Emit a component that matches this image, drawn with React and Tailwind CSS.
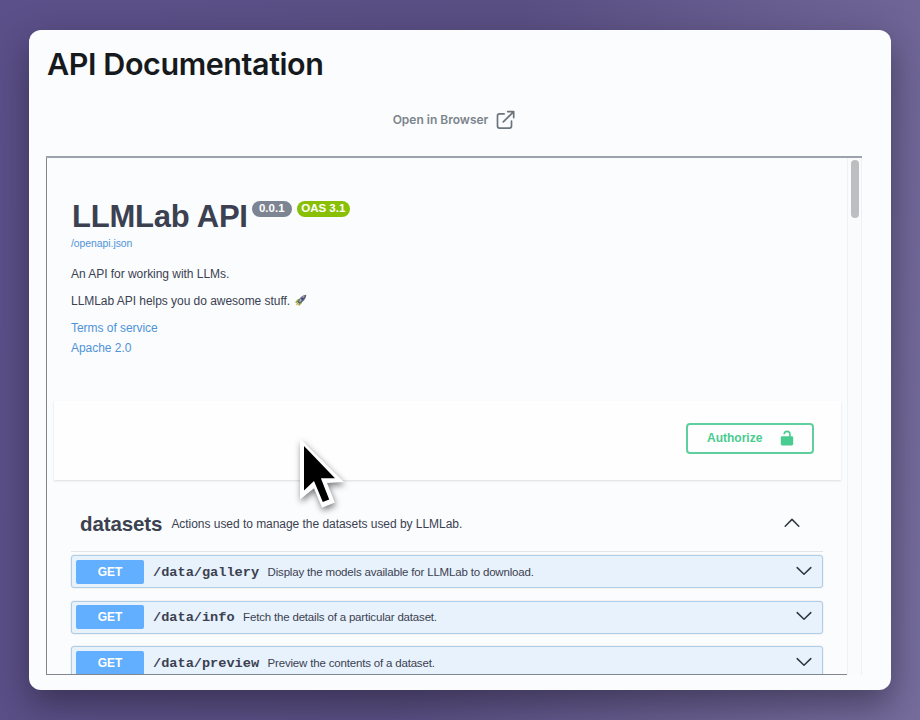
const ENDPOINTS = [
  { path: '/data/gallery', summary: 'Display the models available for LLMLab to download.' },
  { path: '/data/info', summary: 'Fetch the details of a particular dataset.' },
  { path: '/data/preview', summary: 'Preview the contents of a dataset.' },
];

function Chevron({ up = false }) {
  return (
    <svg className="mb-[2px] h-[10px] w-[16px] shrink-0" viewBox="0 0 16 10" fill="none" stroke="#30363f" strokeWidth="1.5" strokeLinecap="round" strokeLinejoin="round">
      <path d={up ? 'M1.2 8.2 8 1.4l6.8 6.8' : 'M1.2 1.6 8 8.2l6.8-6.6'} />
    </svg>
  );
}

function ExternalIcon() {
  return (
    <svg className="ml-[8px] h-[20px] w-[20px]" viewBox="0 0 20 20" fill="none" stroke="#6d757c" strokeWidth="1.7" strokeLinecap="round" strokeLinejoin="round">
      <path d="M8.1 3.9H3.5a2 2 0 0 0-2 2v10.2a2 2 0 0 0 2 2h10a2 2 0 0 0 2-2v-5" />
      <path d="M11.7 1.6h6v6M17.5 1.8 7.3 11.9" />
    </svg>
  );
}

function UnlockIcon() {
  return (
    <svg className="h-[16px] w-[14px]" viewBox="0 0 14 16">
      <path d="M4.2 4.2C4.3 2.3 5.4 1.4 7 1.4c1.7 0 2.9 1 2.9 2.8V7" fill="none" stroke="#49cc90" strokeWidth="1.6" />
      <rect x="0.8" y="6.2" width="12.4" height="9.2" rx="1.4" fill="#49cc90" />
    </svg>
  );
}

function Rocket() {
  return (
    <svg className="ml-[4px] h-[13px] w-[13px]" viewBox="0 0 13 13">
      <path d="M1 8.2 4 5l2 .3-3.2 4zM5 12l3-3-.3-2-3.5 3.2z" fill="#8fae3c" />
      <path d="M3.5 8.2C5 4.2 8 1.3 12.3.7 12 5 9 8 5.2 9.8z" fill="#596273" />
      <path d="M5 7.2C6.2 4.4 8.4 2.4 11 1.6L6.2 8.3z" fill="#aab0bc" />
      <circle cx="8.2" cy="4.6" r="1.2" fill="#3f3c78" />
      <path d="M3.3 8.4 5 10 2 11.6z" fill="#dd9b55" />
    </svg>
  );
}

function Cursor() {
  return (
    <svg className="absolute left-[292px] top-[430px] h-[88px] w-[62px] drop-shadow-[1px_3px_3px_rgba(0,0,0,0.5)]" viewBox="292 430 62 88">
      <path d="M300 438.5 344 482l-17 1 7.8 19.6-12.8 5.2-8-19.6L300 499.5z" fill="#fff" />
      <path d="M304 446v44.5l10-9.6 8.8 21.2 6.4-2.6-8.3-21.3H335z" fill="#000" />
    </svg>
  );
}

function Endpoint({ path, summary }) {
  return (
    <div className="flex h-[33px] w-[752px] shrink-0 items-center rounded-[3px] border border-[#afcde4] bg-[#e8f2fc] pl-[4px] pr-[10px] shadow-[0_0_2px_rgba(0,0,0,0.14)]">
      <span className="flex h-[24px] w-[68px] items-center justify-center rounded-[2px] bg-[#61affe] text-[12px] font-bold text-white">GET</span>
      <span className="ml-[9px] pt-[3px] font-['Liberation_Mono',monospace] text-[13.6px] font-bold text-[#3b4151]">{path}</span>
      <span className="ml-[8.5px] pt-[2px] text-[11.5px] tracking-[-0.18px] text-[#3b4151]">{summary}</span>
      <span className="flex-1" />
      <Chevron />
    </div>
  );
}

export default function App() {
  return (
    <div className="relative h-[720px] w-[920px] overflow-hidden whitespace-nowrap bg-[linear-gradient(100deg,#5b5089_0%,#5a4f83_50%,#766d9d_100%)] px-[29px] pt-[30px] font-['Liberation_Sans',Arial,sans-serif]">
      <main className="flex h-[660px] w-[862px] flex-col rounded-[12px] bg-[#fafcfe] pl-[17px] shadow-[0_14px_34px_0_rgba(28,24,42,0.5)]">
        <header className="h-[126px] shrink-0">
          <h1 className="flex h-[68px] items-center pl-px font-['Inter',sans-serif] text-[30.5px] font-semibold tracking-[-0.42px] text-[#171a1c]">API Documentation</h1>
          <a className="flex h-[44px] w-[816px] items-center justify-center pl-px font-['Inter',sans-serif] text-[12px] font-semibold text-[#7c848c]">
            Open in Browser
            <ExternalIcon />
          </a>
        </header>

        <div className="flex h-[519px] w-[816px] border-t-2 border-[#9da3aa]">
          <section className="flex h-[517px] w-[801px] flex-col overflow-hidden border-b border-l border-[#80878f] text-[#3b4151]">
            <div className="h-[243px] shrink-0 pl-[24px] pt-[42px] text-[12px] tracking-[-0.04px]">
              <div className="flex h-[34px] items-start tracking-normal">
                <h2 className="pl-px text-[31px] font-bold leading-[34px] tracking-[-0.22px]">LLMLab API</h2>
                <span className="ml-[4px] mt-px flex h-[16px] w-[40px] items-center justify-center rounded-full bg-[#7d8492] text-[11.5px] font-bold text-white">0.0.1</span>
                <span className="ml-[5px] mt-px flex h-[16px] w-[53px] items-center justify-center rounded-full bg-[#89bf04] text-[11.5px] font-bold text-white">OAS 3.1</span>
              </div>
              <a className="flex h-[20px] items-center text-[10.4px] text-[#4f93d6]">/openapi.json</a>
              <p className="mt-[6px] flex h-[27px] items-center">An API for working with LLMs.</p>
              <p className="flex h-[27px] items-center">LLMLab API helps you do awesome stuff. <Rocket /></p>
              <a className="mt-[4px] flex h-[20px] items-center text-[#4f93d6]">Terms of service</a>
              <a className="flex h-[20px] items-center text-[#4f93d6]">Apache 2.0</a>
            </div>

            <div className="ml-[7px] flex h-[79px] w-[787px] shrink-0 justify-end bg-[#fefefe] pr-[27px] pt-[22px] shadow-[0_1px_2px_rgba(0,0,0,0.13)]">
              <button className="flex h-[31px] w-[128px] items-center rounded-[4px] border-2 border-[#5fcf9d] pb-[2px] pl-[19px] text-[12px] font-bold text-[#49cc90]">
                Authorize
                <span className="ml-[18px]"><UnlockIcon /></span>
              </button>
            </div>

            <div className="ml-[24px] mt-[16px] flex h-[56px] w-[752px] shrink-0 items-center border-b border-[#dfe5e8] pl-[9px] pr-[23px]">
              <h3 className="pt-[2px] text-[20.5px] font-bold tracking-[-0.1px]">datasets</h3>
              <p className="ml-[9px] pt-px text-[12px] tracking-[-0.04px]">Actions used to manage the datasets used by LLMLab.</p>
              <span className="flex-1" />
              <Chevron up />
            </div>
            <div className="ml-[24px] mt-[3px] flex flex-col gap-[12.5px]">
              {ENDPOINTS.map((e) => <Endpoint key={e.path} {...e} />)}
            </div>
          </section>
          <aside className="h-[517px] w-[15px] border-x border-[#eff1f3] bg-[#fafbfc] pl-[2.5px] pt-[2px]">
            <div className="h-[58px] w-[8px] rounded-full bg-[#bcbfc1]" />
          </aside>
        </div>
      </main>
      <Cursor />
    </div>
  );
}
